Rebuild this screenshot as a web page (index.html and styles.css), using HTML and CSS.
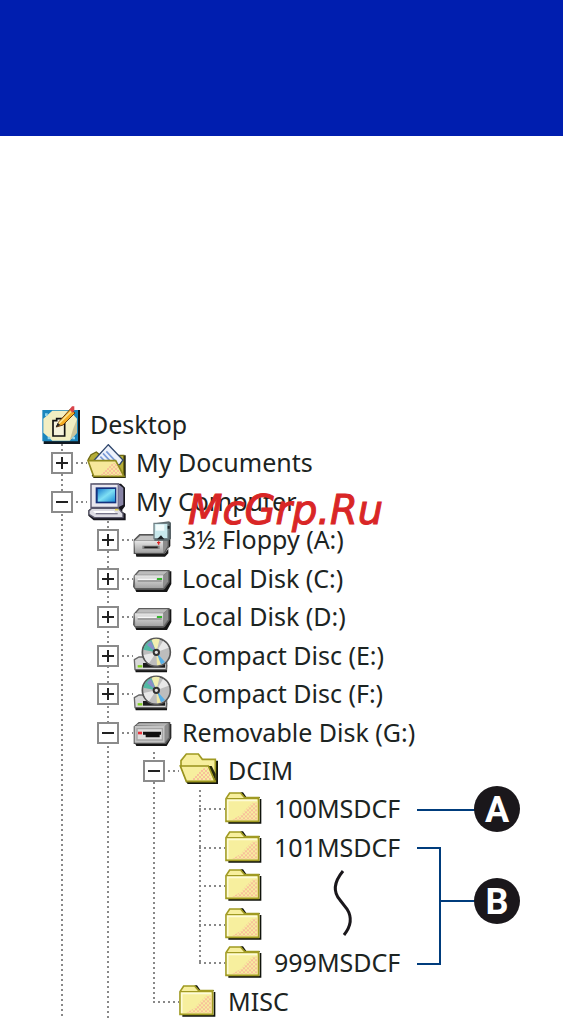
FILE: index.html
```html
<!DOCTYPE html>
<html lang="en">
<head>
    <meta charset="UTF-8">
    <meta name="viewport" content="width=device-width, initial-scale=1.0">
    <title>Folder structure</title>
    <link rel="stylesheet" href="styles.css">
</head>
<body>
    <svg class="sprite" aria-hidden="true">
        <defs>
            <pattern id="dither" width="12" height="12" patternUnits="userSpaceOnUse">
                <rect width="6" height="6" fill="#f8c09a"/>
                <rect x="6" y="6" width="6" height="6" fill="#f8c09a"/>
            </pattern>
            <linearGradient id="screen" x1="0" y1="0" x2="1" y2="1">
                <stop offset="0" stop-color="#1c7fd0"/>
                <stop offset="0.5" stop-color="#7fe0f4"/>
                <stop offset="1" stop-color="#1f8fd8"/>
            </linearGradient>
            <linearGradient id="metal" x1="0" y1="0" x2="0" y2="1">
                <stop offset="0" stop-color="#e6e6e6"/>
                <stop offset="1" stop-color="#a4a4a4"/>
            </linearGradient>
        </defs>
        <symbol id="desktop" viewBox="0 0 120 114">
            <path d="M8 12h109v102H8z" fill="#101820"/>
            <path d="M4 12h107v94H4z" fill="#1b86bd"/>
            <path d="M34 14h52l22 24v42l-22 24H34L7 80V38z" fill="#f2eec2"/>
            <path d="M86 104l22-24V40L96 70z" fill="#c9c49a"/>
            <path d="M12 22h8v8h-8zM20 92h8v8h-8zM94 92h8v8h-8z" fill="#8fd4ee"/>
            <path d="M36 44h11v-6h16v6h8v46H36z" fill="#f5f2dc" stroke="#111" stroke-width="5"/>
            <path d="M46 63l8-16L88 9l14 12-36 36z" fill="#f4ac22" stroke="#6b3c10" stroke-width="3"/>
            <path d="M53 53l39-38" stroke="#fbe38c" stroke-width="5"/>
            <path d="M86 10l7-9h7v12l-6 8z" fill="#d9434b"/>
            <path d="M44 64l6-13 8 6z" fill="#222"/>
        </symbol>
        <symbol id="documents" viewBox="0 0 120 114">
            <path d="M104 34h12v68h-96l-6-8z" fill="#14160a"/>
            <path d="M4 46l8-14 16-8 12 10h70v62H22z" fill="#b5ad38" stroke="#6f6a14" stroke-width="4"/>
            <path d="M22 48L64 2l44 46-10 14H30z" fill="#eef2fb" stroke="#31486e" stroke-width="4"/>
            <path d="M40 38l20 20M48 28l26 28M58 22l28 30" stroke="#7a9bd8" stroke-width="5"/>
            <path d="M3 50h83l25 47H20z" fill="#f7e89c" stroke="#8f891f" stroke-width="5"/>
            <path d="M40 94l34-34 12-4 19 38z" fill="url(#dither)"/>
        </symbol>
        <symbol id="computer" viewBox="0 0 120 114">
            <path d="M18 2h84l12 12v56l-8 10v6l10 6v20H20L4 98V82l8-6V8z" fill="#15151c"/>
            <path d="M12 3h82v70H12z" fill="#e9e7ef" stroke="#56546e" stroke-width="4"/>
            <path d="M94 3l15 12v50l-15 8z" fill="#8884a6"/>
            <path d="M26 13h62v48H26z" fill="#14317e"/>
            <path d="M32 18h52v38H32z" fill="url(#screen)"/>
            <path d="M6 84l8-8h80l14 16v12H22L6 94z" fill="#dedde4" stroke="#5b596c" stroke-width="4"/>
            <path d="M18 84h62l8 8H26z" fill="#fff"/>
            <path d="M26 92h66" stroke="#77758a" stroke-width="4"/>
            <path d="M84 80h10" stroke="#e6d44c" stroke-width="5"/>
        </symbol>
        <symbol id="floppy" viewBox="0 -3 120 114">
            <path d="M8 94h88l16-22V42h-6v52l-10 10H10z" fill="#1a1a1a"/>
            <path d="M4 54l16-16h86v34L94 94H4z" fill="#8c8c8c" stroke="#555" stroke-width="4"/>
            <path d="M4 56h86v36H6z" fill="url(#metal)"/>
            <path d="M8 54l14-12h82L90 54z" fill="#c4c4c4"/>
            <path d="M28 76h52" stroke="#858585" stroke-width="10"/>
            <path d="M34 76h40" stroke="#222" stroke-width="5"/>
            <path d="M64 4l44-6 6 4v48l-8 6H64z" fill="#596468"/>
            <path d="M63 4h42v46H63z" fill="#c8e8ec" stroke="#6f8085" stroke-width="4"/>
            <path d="M68 8h26v18H68z" fill="#f3fcfc"/>
            <path d="M72 52l12-12 10 12zM104 12h6v8h-6z" fill="#1d2226"/>
            <path d="M77 58v10M72 62h10" stroke="#e02424" stroke-width="4"/>
        </symbol>
        <symbol id="disk" viewBox="0 0 120 114">
            <path d="M106 34h9v38L102 96H10l-4-8h86z" fill="#161616"/>
            <path d="M4 48l14-16h90v34L94 86H6l-4-6z" fill="#777" stroke="#5c5c5c" stroke-width="4"/>
            <path d="M10 44l10-10h84L92 44z" fill="#bcbcbc"/>
            <path d="M5 46h86v38H7z" fill="url(#metal)"/>
            <path d="M92 46l13-12v30L92 82z" fill="#8e8e8e"/>
            <path d="M14 63h72" stroke="#8a8a8a" stroke-width="4"/>
            <path d="M14 58h56" stroke="#f6f6f6" stroke-width="4"/>
            <path d="M72 57h15" stroke="#35b42c" stroke-width="6"/>
        </symbol>
        <symbol id="disc" viewBox="0 -4 120 114">
            <path d="M6 92h88l10-16V62l-2 40H8z" fill="#151515"/>
            <path d="M4 64l14-8h82v38H6z" fill="#d9d9d9" stroke="#666" stroke-width="4"/>
            <path d="M30 74h66v14H30z" fill="#1c1c1c"/>
            <path d="M14 84h14" stroke="#7fd01e" stroke-width="7"/>
            <circle cx="70" cy="42" r="42" fill="#bdbdbd" stroke="#555" stroke-width="5"/>
            <path d="M70 42L56 4A40 40 0 0 1 80 3z" fill="#f1eeb0"/>
            <path d="M70 42L31 34A40 40 0 0 1 55 5z" fill="#52b9a4"/>
            <path d="M70 42L42 20A38 38 0 0 1 54 9z" fill="#8a8cc8"/>
            <path d="M70 42l37-14A39 39 0 0 0 90 8z" fill="#e8e8e8"/>
            <path d="M70 42L32 50A39 39 0 0 0 48 75z" fill="#e8e8e8"/>
            <path d="M70 42l26 29A39 39 0 0 1 84 78z" fill="#55aee6"/>
            <path d="M70 42l13 36A39 39 0 0 1 72 81z" fill="#efe9a4"/>
            <circle cx="70" cy="42" r="8" fill="#e2e2e2" stroke="#333" stroke-width="6"/>
        </symbol>
        <symbol id="removable" viewBox="0 0 120 114">
            <path d="M106 30h9v42l-14 24H10l-4-8h86z" fill="#161616"/>
            <path d="M4 38l14-12h92v46L98 88H4z" fill="#777" stroke="#555" stroke-width="4"/>
            <path d="M8 34l12-6h86L96 36z" fill="#b4b4b4"/>
            <path d="M5 36h90v50H5z" fill="#c4c4c4"/>
            <path d="M12 44h76v34H12z" fill="#dedede" stroke="#a4a4a4" stroke-width="4"/>
            <path d="M96 36l10-8v42L96 84z" fill="#8e8e8e"/>
            <path d="M30 53h54v9h-4v8H38v-8h-8z" fill="#111"/>
            <path d="M15 57h12" stroke="#e8313a" stroke-width="8"/>
        </symbol>
        <symbol id="folder-open" viewBox="0 0 120 114">
            <path d="M108 26h9v70H26l-6-8h88z" fill="#10130c"/>
            <path d="M6 42V26L22 6h36l12 16h39v66H24z" fill="#f7ef9e" stroke="#a09a22" stroke-width="5"/>
            <path d="M88 42h10l12 24v22z" fill="#26280c"/>
            <path d="M4 42h84l20 46H22z" fill="#f7ef9e" stroke="#99931d" stroke-width="5"/>
            <path d="M38 84l30-32 16-6 16 38z" fill="url(#dither)"/>
        </symbol>
        <symbol id="folder" viewBox="0 -4 120 114">
            <path d="M46 3h8l10 14h40v6h5v74H10v-6h94V20H60z" fill="#10130c"/>
            <path d="M3 22L14 5h33l12 14h42v71H3z" fill="#f7ef9e" stroke="#a09a22" stroke-width="5"/>
            <path d="M6 22h93" stroke="#a09a22" stroke-width="4"/>
            <path d="M8 86V27h88" fill="none" stroke="#fdfbd8" stroke-width="5"/>
            <path d="M20 86l26-14 18-20 18-18h16v52z" fill="url(#dither)"/>
        </symbol>
    </svg>

    <header class="banner"></header>

    <main class="page">
        <div class="tree">
            <div class="row root"><svg class="icon"><use href="#desktop"/></svg><span class="label">Desktop</span></div>
            <ul>
                <li>
                    <div class="row"><button class="toggle plus" aria-label="Expand My Documents"></button><svg class="icon"><use href="#documents"/></svg><span class="label">My Documents</span></div>
                </li>
                <li>
                    <div class="row"><button class="toggle" aria-label="Collapse My Computer"></button><svg class="icon"><use href="#computer"/></svg><span class="label">My Computer<strong class="watermark">McGrp.Ru</strong></span></div>
                    <ul>
                        <li>
                            <div class="row"><button class="toggle plus" aria-label="Expand drive A"></button><svg class="icon"><use href="#floppy"/></svg><span class="label">3½ Floppy (A:)</span></div>
                        </li>
                        <li>
                            <div class="row"><button class="toggle plus" aria-label="Expand drive C"></button><svg class="icon"><use href="#disk"/></svg><span class="label">Local Disk (C:)</span></div>
                        </li>
                        <li>
                            <div class="row"><button class="toggle plus" aria-label="Expand drive D"></button><svg class="icon"><use href="#disk"/></svg><span class="label">Local Disk (D:)</span></div>
                        </li>
                        <li>
                            <div class="row"><button class="toggle plus" aria-label="Expand drive E"></button><svg class="icon"><use href="#disc"/></svg><span class="label">Compact Disc (E:)</span></div>
                        </li>
                        <li>
                            <div class="row"><button class="toggle plus" aria-label="Expand drive F"></button><svg class="icon"><use href="#disc"/></svg><span class="label">Compact Disc (F:)</span></div>
                        </li>
                        <li>
                            <div class="row"><button class="toggle" aria-label="Collapse drive G"></button><svg class="icon"><use href="#removable"/></svg><span class="label">Removable Disk (G:)</span></div>
                            <ul class="closed">
                                <li>
                                    <div class="row"><button class="toggle" aria-label="Collapse DCIM"></button><svg class="icon"><use href="#folder-open"/></svg><span class="label">DCIM</span></div>
                                    <div class="branch">
                                        <ul class="closed">
                                            <li><div class="row leaf"><svg class="icon"><use href="#folder"/></svg><span class="label">100MSDCF</span></div></li>
                                            <li><div class="row leaf"><svg class="icon"><use href="#folder"/></svg><span class="label">101MSDCF</span></div></li>
                                            <li><div class="row leaf"><svg class="icon"><use href="#folder"/></svg></div></li>
                                            <li><div class="row leaf"><svg class="icon"><use href="#folder"/></svg></div></li>
                                            <li><div class="row leaf"><svg class="icon"><use href="#folder"/></svg><span class="label">999MSDCF</span></div></li>
                                        </ul>
                                        <svg class="callouts" width="194" height="191">
                                            <path class="wave" d="M16 81C7 92 6 102 13 110L20 119C25 127 25 135 17 145"/>
                                            <path class="lead" d="M90 20h58M90 58h23v116H90M113 111h35"/>
                                            <circle cx="170" cy="19" r="23"/>
                                            <circle cx="170" cy="111" r="23"/>
                                            <text x="170" y="32">A</text>
                                            <text x="170" y="124">B</text>
                                        </svg>
                                    </div>
                                </li>
                                <li>
                                    <div class="row leaf"><svg class="icon"><use href="#folder"/></svg><span class="label">MISC</span></div>
                                </li>
                            </ul>
                        </li>
                    </ul>
                </li>
            </ul>
        </div>
    </main>
</body>
</html>
```
FILE: styles.css
```css
body {
    margin: 0;
    background-color: #fff;
    color: #1c2422;
    font-family: "Noto Sans", Tahoma, sans-serif;
    font-size: 25px;
    line-height: 36px;
}
.sprite {
    position: absolute;
    width: 0;
    height: 0;
}
.banner {
    height: 136px;
    background-color: #001eaf;
}
.page {
    padding: 269px 0 0 39px;
}
.tree {
    margin-bottom: -2px;
}
ul {
    list-style-type: none;
    margin: 0;
    padding: 0;
    /* dotted guide running down the level */
    background: repeating-linear-gradient(#888 0 2px, transparent 2px 5px) 22px 0 / 2px 100% no-repeat;
}
ul ul {
    margin-left: 46px;
}
ul.closed {
    background-size: 2px calc(100% - 19px);
}
.row {
    display: flex;
    align-items: center;
    height: 38px;
    white-space: nowrap;
    background: repeating-linear-gradient(90deg, #888 0 2px, transparent 2px 5px) 22px 50% / 26px 2px no-repeat;
}
.root {
    height: 39px;
    background: none;
}
li:nth-child(even) > .row {
    height: 39px;
}
.leaf {
    padding-left: 46px;
}
.icon {
    flex: none;
    width: 40px;
    height: 38px;
    margin: 0 9px 0 2px;
}
.label {
    position: relative;
    padding-bottom: 2px;
}
.toggle {
    flex: none;
    width: 22px;
    height: 22px;
    margin: 0 12px;
    padding: 0;
    border: 2px solid #8b8b8b;
    border-radius: 0;
    background: linear-gradient(#222, #222) center / 12px 2px no-repeat #fff;
    cursor: pointer;
}
.toggle.plus {
    background: linear-gradient(#222, #222) center / 12px 2px no-repeat,
        linear-gradient(#222, #222) center / 2px 12px no-repeat #fff;
}
/* site stamp printed over the label */
.watermark {
    position: absolute;
    left: 52px;
    top: 8px;
    color: #d92626;
    font: italic 40px "DejaVu Sans", sans-serif;
    line-height: 38px;
    -webkit-text-stroke: 1px #d92626;
}
.branch {
    display: grid;
}
.branch > * {
    grid-area: 1 / 1;
}
.callouts {
    margin-left: 196px;
    overflow: visible;
    fill: #1a171b;
}
.callouts text {
    fill: #fff;
    font: bold 36px Roboto, sans-serif;
    text-anchor: middle;
}
.wave {
    fill: none;
    stroke: #1a171b;
    stroke-width: 3;
}
.lead {
    fill: none;
    stroke: #003c7c;
    stroke-width: 2;
}
```
